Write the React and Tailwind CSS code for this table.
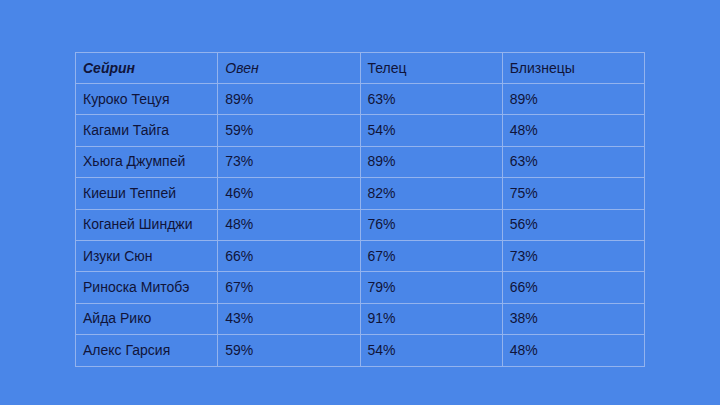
import React from "react";

const rows = [
  ["Куроко Тецуя", "89%", "63%", "89%"],
  ["Кагами Тайга", "59%", "54%", "48%"],
  ["Хьюга Джумпей", "73%", "89%", "63%"],
  ["Киеши Теппей", "46%", "82%", "75%"],
  ["Коганей Шинджи", "48%", "76%", "56%"],
  ["Изуки Сюн", "66%", "67%", "73%"],
  ["Риноска Митобэ", "67%", "79%", "66%"],
  ["Айда Рико", "43%", "91%", "38%"],
  ["Алекс Гарсия", "59%", "54%", "48%"],
];

export default function App() {
  return (
    <div
      className="w-[720px] h-[405px] bg-[#4a86e8] pt-[52px] pl-[75px] text-[14px] text-[#10143a]"
      style={{ fontFamily: '"Liberation Sans", Arial, sans-serif' }}
    >
      <table className="border-collapse w-[570px] table-fixed">
        <thead>
          <tr className="h-[31px]">
            <th className="border border-[#93b3ee] text-left font-bold italic pl-[7px]">Сейрин</th>
            <th className="border border-[#93b3ee] text-left font-normal italic pl-[7px]">Овен</th>
            <th className="border border-[#93b3ee] text-left font-normal pl-[7px]">Телец</th>
            <th className="border border-[#93b3ee] text-left font-normal pl-[7px]">Близнецы</th>
          </tr>
        </thead>
        <tbody>
          {rows.map((r) => (
            <tr key={r[0]} className="h-[31.4px]">
              {r.map((c, i) => (
                <td key={i} className="border border-[#93b3ee] pl-[7px]">
                  {c}
                </td>
              ))}
            </tr>
          ))}
        </tbody>
      </table>
    </div>
  );
}
